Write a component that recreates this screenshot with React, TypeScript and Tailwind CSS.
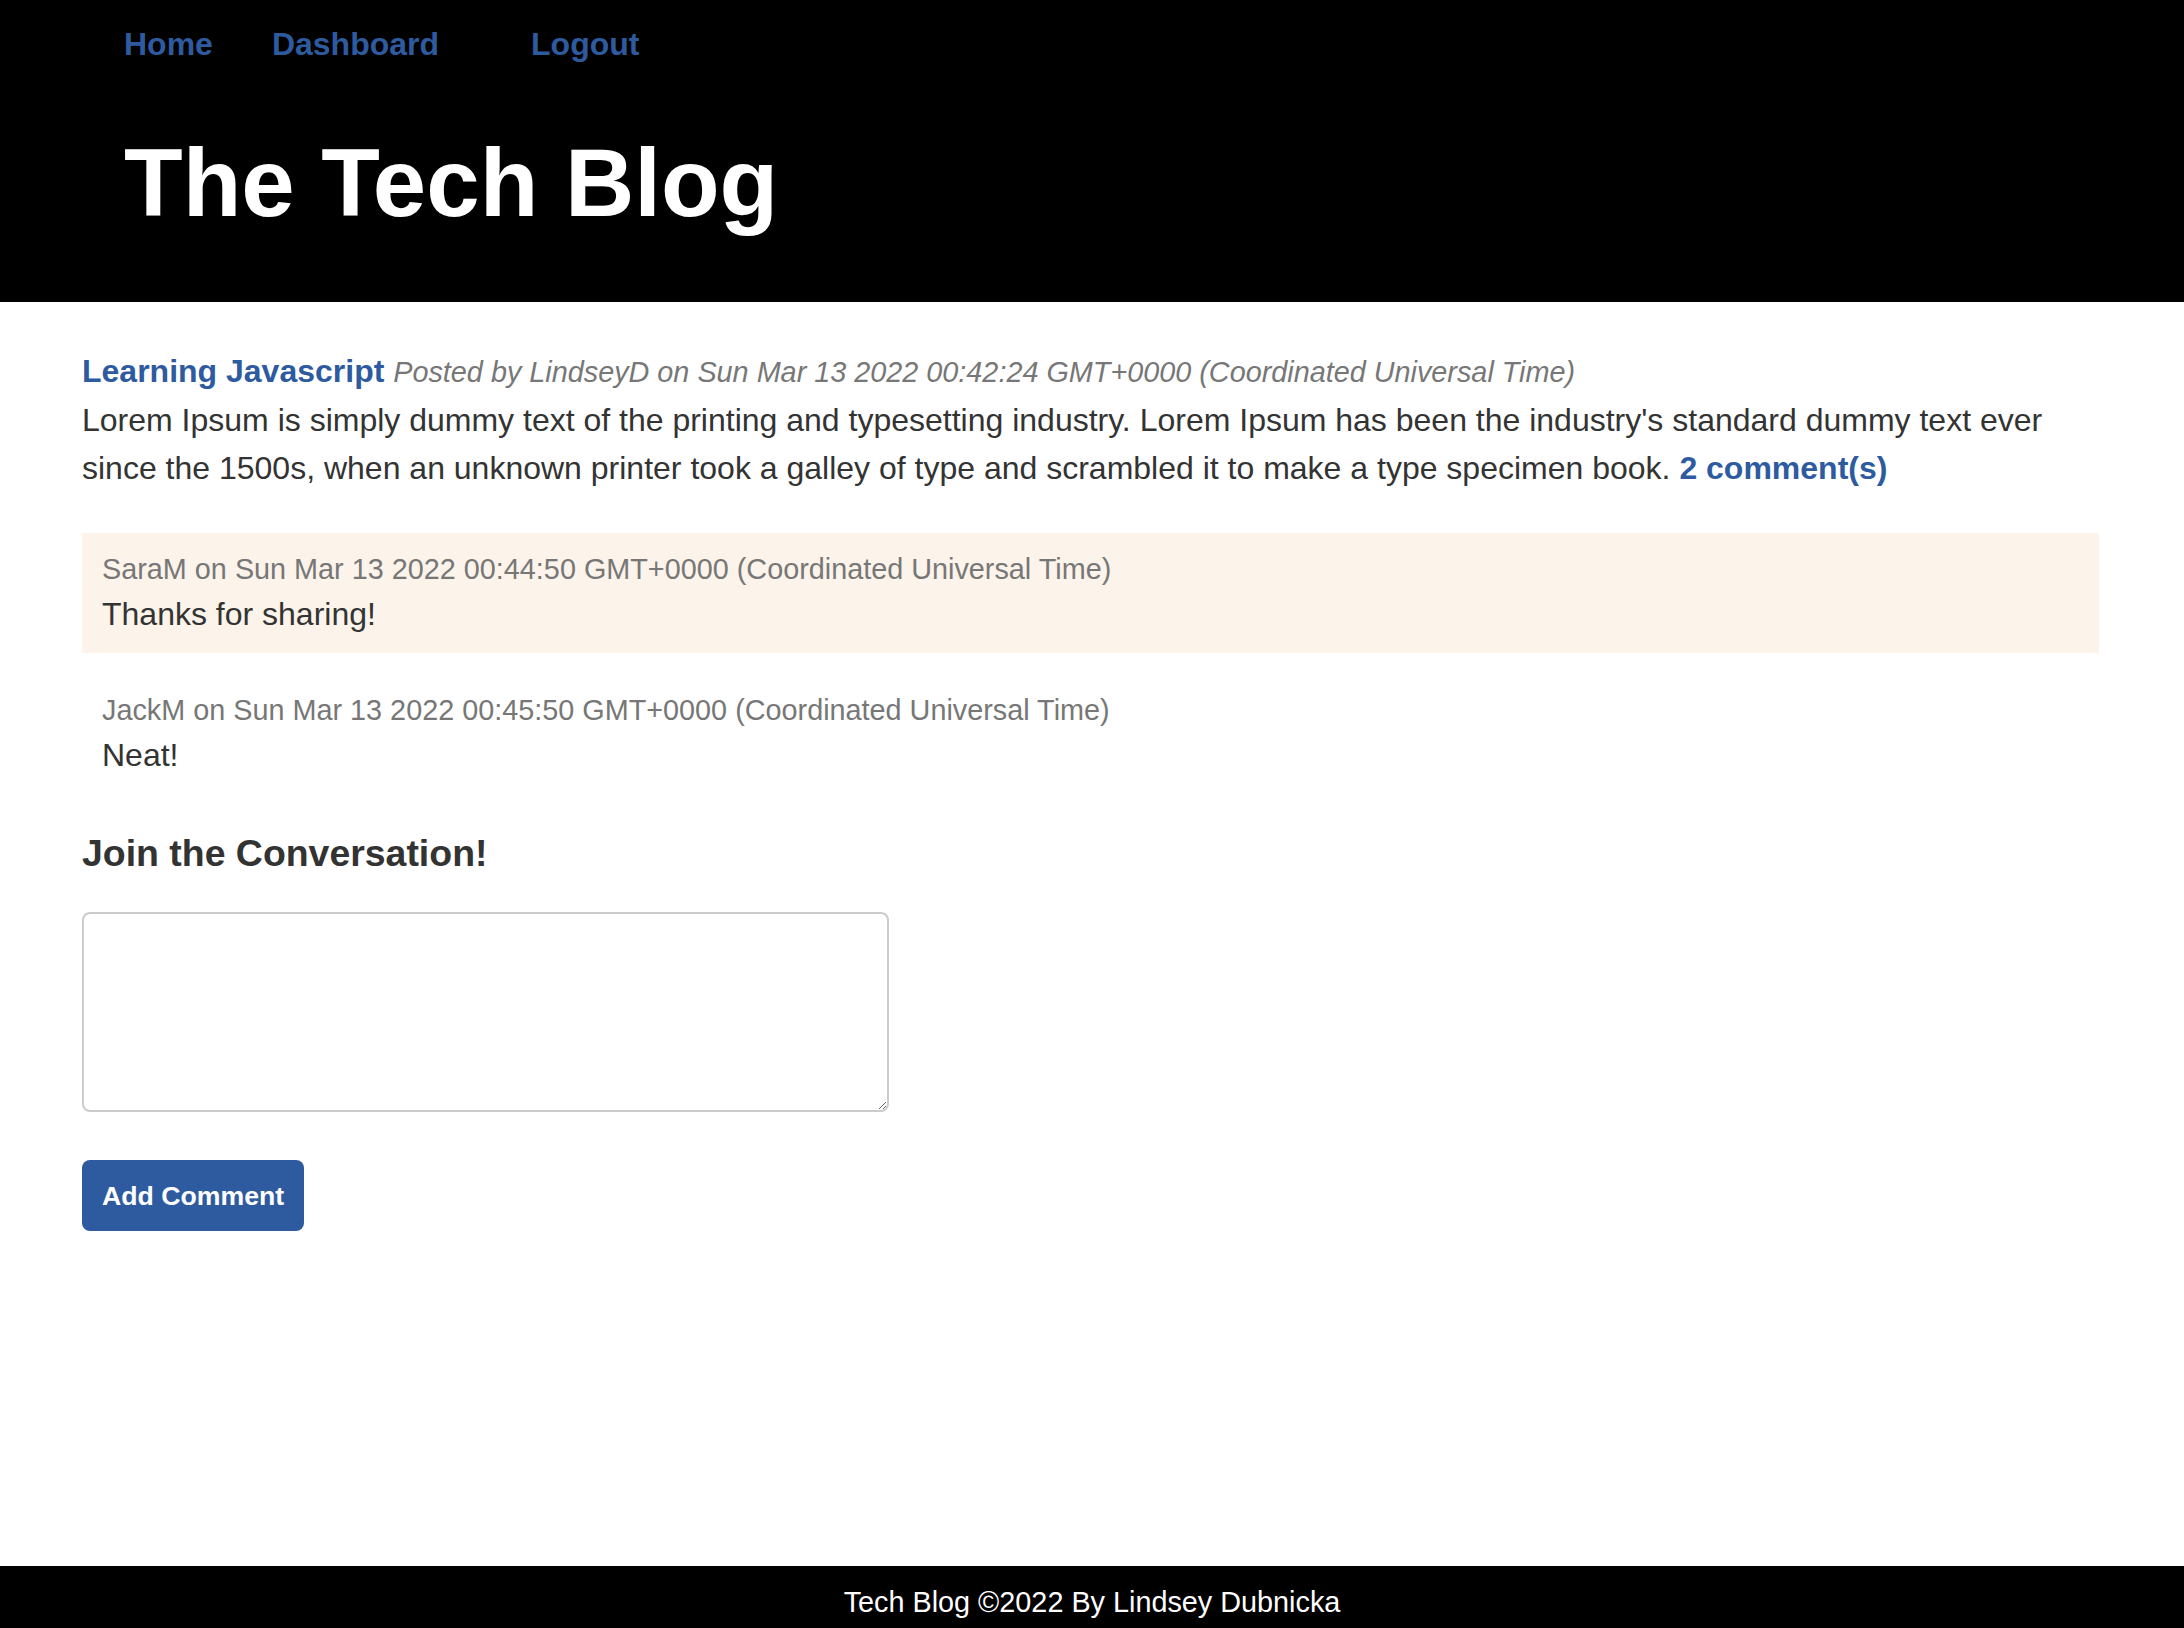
export default function App() {
  const comments = [
    { author: 'SaraM', date: 'Sun Mar 13 2022 00:44:50 GMT+0000 (Coordinated Universal Time)', text: 'Thanks for sharing!', shaded: true },
    { author: 'JackM', date: 'Sun Mar 13 2022 00:45:50 GMT+0000 (Coordinated Universal Time)', text: 'Neat!', shaded: false },
  ];

  return (
    <div className="min-h-screen flex flex-col bg-white font-['Liberation_Sans',Arial,sans-serif] text-[#333]">
      <header className="bg-black pl-[124px] pt-[20px]">
        <nav className="flex text-[32px] leading-[48px] font-bold text-[#2e5b9f]">
          <a href="#">Home</a>
          <a href="#" className="ml-[59px]">Dashboard</a>
          <a href="#" className="ml-[92px]">Logout</a>
        </nav>
        <h1 className="mt-[60px] mb-[64px] text-[96px] leading-[110px] font-bold text-white">The Tech Blog</h1>
      </header>

      <main className="flex-1 pl-[82px] pr-[85px] pt-[45px]">
        <div className="text-[32px] leading-[48px]">
          <a href="#" className="font-bold text-[#2e5b9f]">Learning Javascript</a>{' '}
          <span className="italic text-[28.8px] text-[#777]">
            Posted by LindseyD on Sun Mar 13 2022 00:42:24 GMT+0000 (Coordinated Universal Time)
          </span>
        </div>
        <p className="text-[32px] leading-[48px]">
          Lorem Ipsum is simply dummy text of the printing and typesetting industry. Lorem Ipsum has been the industry's standard dummy text ever since the 1500s, when an unknown printer took a galley of type and scrambled it to make a type specimen book.{' '}
          <a href="#" className="font-bold text-[#2e5b9f]">2 comment(s)</a>
        </p>

        <div className="mt-[41px] flex flex-col gap-[21px]">
          {comments.map((c, i) => (
            <div key={i} className={`px-[20px] py-[15px] ${c.shaded ? 'bg-[#fcf3ea]' : ''}`}>
              <div className="text-[28.8px] leading-[42px] text-[#777]">
                {c.author} on {c.date}
              </div>
              <div className="text-[32px] leading-[48px]">{c.text}</div>
            </div>
          ))}
        </div>

        <h3 className="mt-[38px] text-[37.44px] leading-[43px] font-bold">Join the Conversation!</h3>
        <textarea className="block mt-[37px] w-[807px] h-[200px] border-2 border-[#ccc] rounded-[8px] bg-white"></textarea>
        <button className="mt-[48px] h-[71px] px-[20px] rounded-[8px] bg-[#2e5b9f] text-white font-bold text-[26.67px]">
          Add Comment
        </button>
      </main>

      <footer className="bg-black h-[62px] pt-[15px] text-center text-white text-[28.8px] leading-[43px]">
        Tech Blog ©2022 By Lindsey Dubnicka
      </footer>
    </div>
  );
}
